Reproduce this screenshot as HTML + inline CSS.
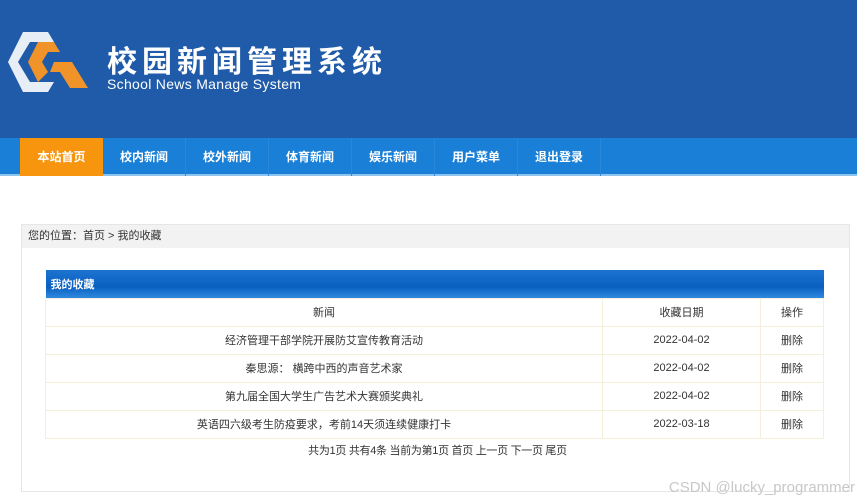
<!DOCTYPE html>
<html><head><meta charset="utf-8"><style>
*{margin:0;padding:0;box-sizing:border-box}
body{width:857px;height:500px;background:#fff;font-family:"Liberation Sans","Noto Sans CJK SC",sans-serif;position:relative;overflow:hidden}
.hd{position:absolute;left:0;top:0;width:857px;height:138px;background:#1f5ba9}
.t1{position:absolute;left:107px;top:37px;color:#fff;font-size:30px;font-weight:bold;letter-spacing:5px}
.t2{position:absolute;left:107px;top:76px;color:#fff;font-size:14px;letter-spacing:0.3px}
.nav{position:absolute;left:0;top:138px;width:857px;height:38px;background:#1a7fd6;border-bottom:2px solid #8cc4ef}
.nav a{position:absolute;top:0;width:83px;height:38px;line-height:38px;text-align:center;color:#fff;font-size:12px;font-weight:bold;border-right:1px solid #2a88da}
.box{position:absolute;left:21px;top:224px;width:829px;height:268px;border:1px solid #e6e6e6}
.bc{height:23px;background:#f2f2f2;font-size:11px;color:#333;line-height:23px;padding-left:6px}
table{position:absolute;left:23px;top:45px;width:779px;border-collapse:collapse;font-size:11px;color:#333}
th.cap{height:28px;text-align:left;color:#fff;font-size:11px;padding-left:5px;background:linear-gradient(#1d74d0,#0a5fc0 60%,#2f8ae0)}
td{height:28px;text-align:center;border:1px solid #f5eedb;vertical-align:middle}
.pg{position:absolute;left:2px;width:100%;top:217px;text-align:center;font-size:11px;color:#333;word-spacing:0;letter-spacing:-0.3px}
.wm{position:absolute;right:2px;bottom:4px;color:#c8c8c8;font-size:15px}
</style></head><body>
<div class="hd">
<svg style="position:absolute;left:8px;top:30px" width="82" height="64" viewBox="0 0 82 64">
<polygon points="15,2 40,2 46,12 22,12 10,32 22,52 46,52 40,62 15,62 0,32" fill="#e8eef6"/>
<polygon points="30,12 46,12 52,22 40,22 34,32 40,42 30,52 20,32" fill="#f0942a"/>
<polygon points="46,32 64,32 80,58 62,58 52,42 42,42" fill="#f0942a"/>
</svg>
<div class="t1">校园新闻管理系统</div>
<div class="t2">School News Manage System</div>
</div>
<div class="nav">
<a style="left:20px;background:#f7950f;border:none">本站首页</a>
<a style="left:103px">校内新闻</a>
<a style="left:186px">校外新闻</a>
<a style="left:269px">体育新闻</a>
<a style="left:352px">娱乐新闻</a>
<a style="left:435px">用户菜单</a>
<a style="left:518px">退出登录</a>
</div>
<div class="box">
<div class="bc">您的位置：首页 &gt; 我的收藏</div>
<table>
<tr><th class="cap" colspan="3">我的收藏</th></tr>
<tr><td style="width:557px">新闻</td><td style="width:158px">收藏日期</td><td>操作</td></tr>
<tr><td>经济管理干部学院开展防艾宣传教育活动</td><td>2022-04-02</td><td>删除</td></tr>
<tr><td>秦思源： 横跨中西的声音艺术家</td><td>2022-04-02</td><td>删除</td></tr>
<tr><td>第九届全国大学生广告艺术大赛颁奖典礼</td><td>2022-04-02</td><td>删除</td></tr>
<tr><td>英语四六级考生防疫要求，考前14天须连续健康打卡</td><td>2022-03-18</td><td>删除</td></tr>
</table>
<div class="pg">共为1页 共有4条 当前为第1页 首页 上一页 下一页 尾页</div>
</div>
<div class="wm">CSDN @lucky_programmer</div>
</body></html>
